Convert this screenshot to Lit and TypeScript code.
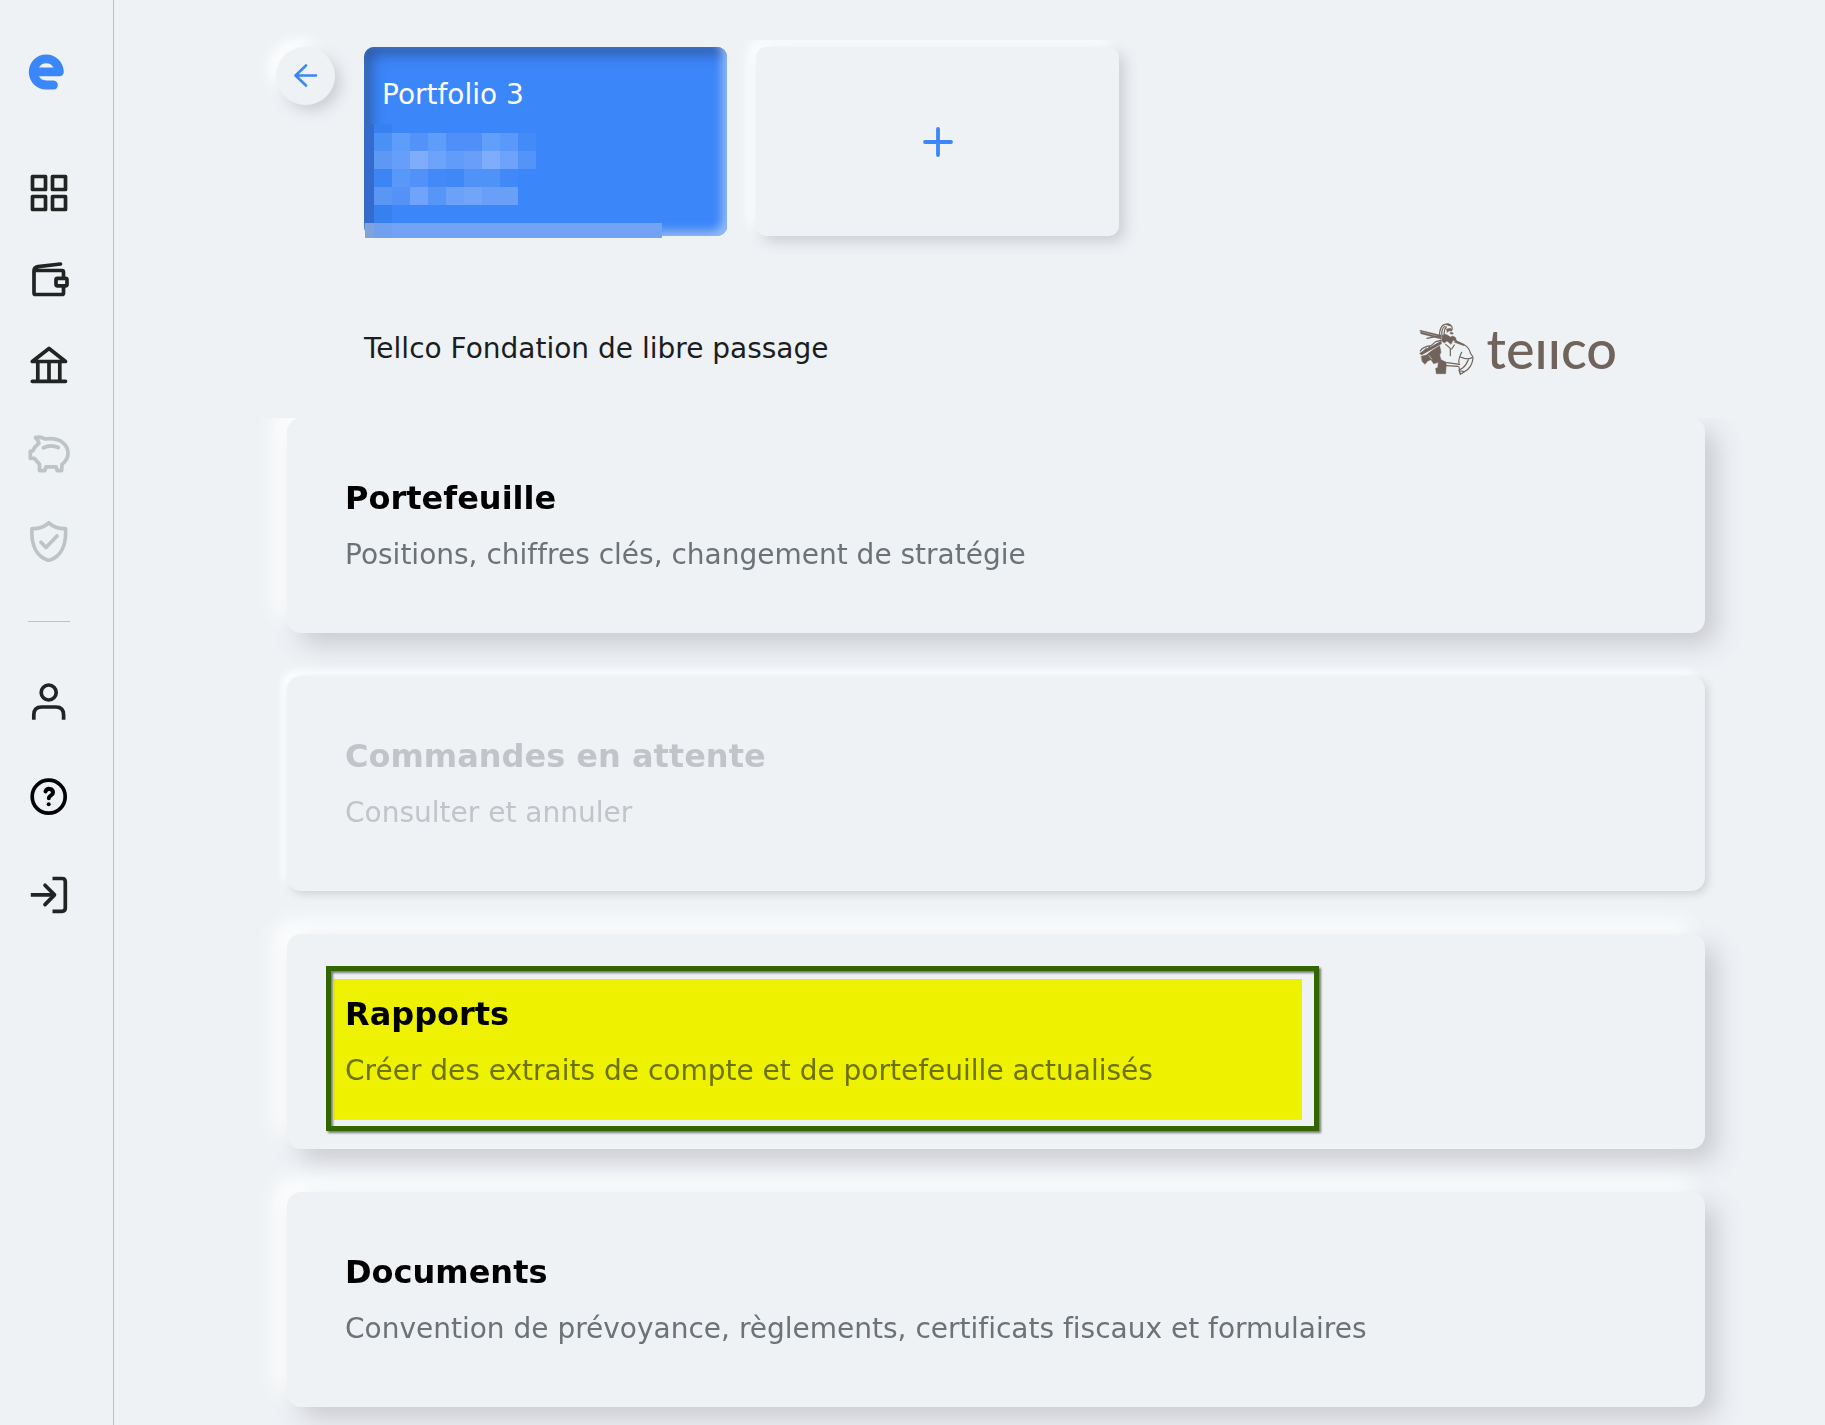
import { LitElement, html, svg, css, nothing } from "lit";
import type { SVGTemplateResult } from "lit";
import { customElement, property } from "lit/decorators.js";

interface NavItem {
  label: string;
  icon: SVGTemplateResult;
  tone?: "muted" | "strong";
}

interface Entry {
  title: string;
  text: string;
  disabled?: boolean;
  highlighted?: boolean;
}

const PRIMARY_NAV: NavItem[] = [
  {
    label: "Aperçu",
    icon: svg`<rect x="4.5" y="4.5" width="13" height="13"/><rect x="24.5" y="4.5" width="13" height="13"/><rect x="4.5" y="24.5" width="13" height="13"/><rect x="24.5" y="24.5" width="13" height="13"/>`,
  },
  {
    label: "Portefeuille",
    icon: svg`<path d="M32.5 5 10 7.6Q6 8.2 6 12V34Q6 35.5 7.5 35.5H34Q35.5 35.5 35.5 34V27M6 11.5H34Q35.5 11.5 35.5 13V19"/><rect x="28" y="19.3" width="11" height="7.5" rx="1.5"/>`,
  },
  {
    label: "Banque",
    icon: svg`<path d="M21 2.5 4.3 15.5H37.5ZM4.3 35.3H37.5M9.8 16V35M21 16V35M31.8 16V35"/>`,
  },
  {
    label: "Épargne",
    tone: "muted",
    icon: svg`<path d="M7.5 4.6Q12.5 3 17 6Q19.5 5.7 22 5.7C33 5.7 40 12 40 20.3Q40 27 34 31.3L33.6 37.6H29.2L28 33.8H18L16.8 37.6H11.5V31.3L6.3 25.3H2.3V18.2L5 17.6Q6.5 13.5 11 10.2Q10 7 7.5 4.6ZM15.3 14.8Q22.7 11 30.3 14.5"/>`,
  },
  {
    label: "Assurance",
    tone: "muted",
    icon: svg`<path d="M20.8 2.8Q27.5 9 37.5 8.7C38.5 25 33 37 20.8 40.5C8.5 37 3 25 4 8.7Q14 9 20.8 2.8ZM13 22.3 18 27.5 29 16"/>`,
  },
];

const SECONDARY_NAV: NavItem[] = [
  {
    label: "Profil",
    icon: svg`<circle cx="20.7" cy="11.5" r="7.5"/><path stroke-linecap="butt" d="M5.8 38.7V34Q5.8 26 13.5 26H28Q35.6 26 35.6 34V38.7"/>`,
  },
  {
    label: "Aide",
    tone: "strong",
    icon: svg`<circle cx="20.7" cy="19.7" r="16.5"/><path stroke-width="4" d="M17.5 14.5C19 10.5 25 11.3 25 15.5C25 18.5 20.8 18.2 20.8 21.3"/><circle cx="20.7" cy="27.2" r="2" fill="currentColor" stroke="none"/>`,
  },
  {
    label: "Déconnexion",
    icon: svg`<path stroke-linecap="butt" d="M24.5 5.5H34Q37.3 5.5 37.3 8.8V35Q37.3 38.3 34 38.3H24.5M2.8 21.9H26"/><path d="M17 12.2 26.5 21.9 17 31.6"/>`,
  },
];

const ENTRIES: Entry[] = [
  { title: "Portefeuille", text: "Positions, chiffres clés, changement de stratégie" },
  { title: "Commandes en attente", text: "Consulter et annuler", disabled: true },
  { title: "Rapports", text: "Créer des extraits de compte et de portefeuille actualisés", highlighted: true },
  { title: "Documents", text: "Convention de prévoyance, règlements, certificats fiscaux et formulaires" },
];

// Blocks that hide the account number and the balance, row by row.
const MASK_CELL = 18;
const MASK_ROWS: string[][] = [
  ["#4a90f5", "#5f9dfb", "#5292f9", "#5f9dfb", "#4e90f8", "#4e90f8", "#629ffb", "#5a99fb", "#438bf8"],
  ["#5c98f4", "#659ff9", "#80adfb", "#6da3fa", "#609cf9", "#699ff9", "#80adfb", "#6da3fa", "#5493f8"],
  ["#3b86f4", "#5997f8", "#5292f8", "#4489f8", "#4088f8", "#4f92f8", "#4f92f8", "#4189f8"],
  ["#5a96f4", "#5492f8", "#70a4fb", "#5796f9", "#6ba1f8", "#70a5f8", "#699ff8", "#6a9ff8"],
];

@customElement("side-nav")
class SideNav extends LitElement {
  static styles = css`
    :host {
      display: block;
      flex: none;
      box-sizing: border-box;
      width: 114px;
      padding: 52px 28px 40px;
      border-right: 1px solid #bcc1c5;
    }
    nav {
      display: flex;
      flex-direction: column;
      gap: 59px;
    }
    svg {
      display: block;
      width: 42px;
      height: 42px;
    }
    .brand {
      display: block;
      margin-bottom: 78px;
      color: #3b86f8;
    }
    .group {
      display: flex;
      flex-direction: column;
      gap: 45px;
      margin: 0;
      padding: 0;
      list-style: none;
    }
    .group.wide {
      gap: 54px;
    }
    .link {
      display: block;
      color: #222424;
    }
    .link.muted {
      color: #bec3c6;
    }
    .link.strong {
      color: #000;
    }
    .rule {
      width: 42px;
      height: 1px;
      margin: 0;
      border: 0;
      background: #bcc1c5;
    }
  `;

  private renderGroup(items: NavItem[], wide: boolean) {
    return html`<ul class="group ${wide ? "wide" : ""}">
      ${items.map(
        (item) => html`<li>
          <a class="link ${item.tone ?? ""}" href="#" aria-label=${item.label}>
            <svg viewBox="0 0 42 42" fill="none" stroke="currentColor" stroke-width="3.7" stroke-linecap="round" stroke-linejoin="round" aria-hidden="true">${item.icon}</svg>
          </a>
        </li>`
      )}
    </ul>`;
  }

  render() {
    return html`
      <a class="brand" href="#" aria-label="Accueil">
        <svg viewBox="0 0 42 42" fill="currentColor" fill-rule="evenodd" aria-hidden="true">
          <path d="M18.2 2.6C8.5 2.6 .8 10.4 .8 20C.8 29.7 8.5 37.6 18.2 37.6H25.5C31.3 37.6 31.3 28.5 25.5 28.5H18.2C14.5 28.5 11.8 26.5 11 24.3H31.5C34.2 24.3 35.8 22.5 35.8 19.8C35.6 10.2 27.8 2.6 18.2 2.6ZM11 15.6C12.5 12.7 15 11.3 18.2 11.3C21.5 11.3 24 12.7 25.4 15.6Z"/>
        </svg>
      </a>
      <nav>
        ${this.renderGroup(PRIMARY_NAV, false)}
        <hr class="rule" />
        ${this.renderGroup(SECONDARY_NAV, true)}
      </nav>
    `;
  }
}

@customElement("portfolio-bar")
class PortfolioBar extends LitElement {
  static styles = css`
    :host {
      display: flex;
      align-items: flex-start;
      gap: 29px;
    }
    button {
      box-sizing: border-box;
      padding: 0;
      border: 0;
      background: #eef2f5;
      font: inherit;
      cursor: pointer;
    }
    .back {
      display: grid;
      place-items: center;
      flex: none;
      width: 59px;
      height: 58px;
      border-radius: 50%;
      color: #3b86f8;
      box-shadow: 6px 6px 14px #cfcfd6, -7px -7px 14px #fff;
    }
    .tiles {
      display: flex;
      flex: 1;
      gap: 29px;
      padding-bottom: 40px;
      clip-path: inset(-7px -40px 0 -20px);
    }
    .tile {
      position: relative;
      flex: 0 1 363px;
      height: 189px;
      border-radius: 10px;
    }
    .current {
      padding: 30px 18px;
      background: #3b86f8;
      box-shadow: inset -5px -5px 10px #98bbf6, inset 7px 7px 14px #2f5ba9;
      color: #fff;
      font-size: 28px;
      line-height: 36px;
      text-align: left;
      display: flex;
      align-items: flex-start;
    }
    .mask {
      position: absolute;
      left: 1px;
      top: 77px;
      width: 297px;
      height: 114px;
    }
    .add {
      display: grid;
      place-items: center;
      color: #3b86f8;
      box-shadow: 6px 6px 14px #cfcfd6, -7px -7px 14px #fff;
    }
  `;

  render() {
    return html`
      <button class="back" aria-label="Retour">
        <svg width="24" height="24" viewBox="0 0 24 24" fill="none" stroke="currentColor" stroke-width="2.6" stroke-linecap="round" stroke-linejoin="round" aria-hidden="true">
          <path d="M22 11.5H2M12 1.5 1.5 11.5 12 21.5"/>
        </svg>
      </button>
      <div class="tiles">
        <button class="tile current">
          <span>Portfolio 3</span>
          <svg class="mask" viewBox="0 0 297 114" shape-rendering="crispEdges" aria-hidden="true">
            <rect width="9" height="99" fill="#346bcc"/>
            <rect x="9" width="18" height="99" fill="#3780f0"/>
            ${MASK_ROWS.map((row, r) =>
              row.map(
                (fill, c) => svg`<rect x=${9 + c * MASK_CELL} y=${9 + r * MASK_CELL} width=${MASK_CELL} height=${MASK_CELL} fill=${fill}/>`
              )
            )}
            <rect y="99" width="297" height="15" fill="#72a3f6"/>
            <rect y="99" width="9" height="15" fill="#80a3dc"/>
            <rect x="9" y="99" width="18" height="15" fill="#71a0ef"/>
          </svg>
        </button>
        <button class="tile add" aria-label="Ajouter un portefeuille">
          <svg width="30" height="30" viewBox="0 0 30 30" fill="none" stroke="currentColor" stroke-width="3.8" stroke-linecap="round" aria-hidden="true">
            <path d="M15 2V28M2 15H28"/>
          </svg>
        </button>
      </div>
    `;
  }
}

@customElement("tellco-logo")
class TellcoLogo extends LitElement {
  static styles = css`
    :host {
      display: flex;
      align-items: center;
      gap: 12px;
      color: #70635b;
    }
    svg {
      display: block;
      width: 56px;
      height: 52px;
    }
    .word {
      font-family: Lato, "Liberation Sans", sans-serif;
      font-size: 54px;
      font-weight: 500;
      line-height: 52px;
    }
  `;

  render() {
    return html`
      <svg viewBox="14 8 168 156" fill="none" stroke="currentColor" stroke-width="3.6" stroke-linejoin="round" stroke-linecap="round" aria-hidden="true">
        <path fill="currentColor" stroke-width="1.5" d="M18 30 80 45V56L20 40Z"/>
        <path stroke="#eef2f5" stroke-width="1" d="M24 35 78 50"/>
        <path d="M38 54 78 46M78 52C72 36 80 14 92 12C104 8 114 14 114 26M84 50C80 36 84 22 92 18M90 46C88 34 90 26 96 20M98 13 110 17"/>
        <path fill="currentColor" stroke-width="1.5" d="M97 26 108 24 114 28 112 32 104 31 99 36ZM109 35 117 38 114 42 108 40ZM84 46 92 42 99 44 108 50 116 47 124 52 126 62 116 60 110 72 98 62 90 68 82 62Z"/>
        <path fill="currentColor" stroke-width="1" d="M124 60 150 72 148 76 120 66ZM17 98 80 62 82 70 22 104Z"/>
        <path d="M18 92C22 84 34 78 50 76L64 64 80 60M24 96 36 84M30 96 46 80M18 100 28 94M40 90 62 76"/>
        <path fill="currentColor" stroke-width="1.5" d="M21 108 36 104 54 90 76 76 80 96 76 104 80 118 96 126 94 160H66L64 144 70 142 72 126 58 130 50 118 40 122 32 132 24 124Z"/>
        <path stroke="#eef2f5" stroke-width="2" d="M44 106 52 116"/>
        <path d="M94 72 108 84V106M98 127 136 132M96 136 132 138M150 74C162 80 166 88 168 98L176 110C168 116 158 116 150 114L138 110M142 96C136 108 132 120 134 128M120 74 112 86"/>
        <path d="M176 114C174 130 164 148 148 156L138 162 134 150 146 142C154 136 158 128 162 118M134 140 138 162M140 152 150 154"/>
      </svg>
      <span class="word" role="img" aria-label="tellco">teııco</span>
    `;
  }
}

@customElement("entry-card")
class EntryCard extends LitElement {
  static styles = css`
    :host {
      display: block;
    }
    .card {
      position: relative;
      box-sizing: border-box;
      display: flex;
      flex-direction: column;
      gap: 19px;
      padding: 60px 58px;
      border-radius: 14px;
      background: #eef2f5;
      box-shadow: 12px 12px 26px #cbcbd2, -12px -12px 22px #fff;
      color: #000;
      text-decoration: none;
    }
    .card.disabled {
      box-shadow: 3px 3px 8px #d0d2d6, -5px -5px 8px #fff;
      color: #c1c4c8;
    }
    .title {
      margin: 0;
      font-size: 32px;
      font-weight: 700;
      line-height: 40px;
    }
    .text {
      margin: 0;
      color: #6d7277;
      font-size: 28px;
      line-height: 36px;
    }
    .disabled .text {
      color: inherit;
    }
    .marker {
      position: absolute;
      inset: 45px 403px 29px 47px;
      background: #ff0;
      mix-blend-mode: multiply;
    }
    .frame {
      position: absolute;
      inset: 32px 386px 18px 39px;
      border: 5px solid #360;
      filter: drop-shadow(2px 2px 1px rgba(0, 0, 0, 0.5));
    }
  `;

  @property({ attribute: false }) entry!: Entry;

  render() {
    const { title, text, disabled, highlighted } = this.entry;
    const content = html`
      <h2 class="title">${title}</h2>
      <p class="text">${text}</p>
      ${highlighted ? html`<span class="frame"></span><span class="marker"></span>` : nothing}
    `;
    return disabled
      ? html`<a class="card disabled" aria-disabled="true">${content}</a>`
      : html`<a class="card" href="#">${content}</a>`;
  }
}

@customElement("app-root")
class AppRoot extends LitElement {
  static styles = css`
    :host {
      display: flex;
      min-height: 100vh;
      background: #eef2f5;
      color: #1b1d1e;
      font-family: "DejaVu Sans", Verdana, sans-serif;
      font-variant-ligatures: none;
    }
    main {
      flex: 1;
      min-width: 0;
      box-sizing: border-box;
      padding: 47px 120px 18px 162px;
    }
    .provider {
      display: flex;
      align-items: center;
      justify-content: space-between;
      gap: 24px;
      margin: 47px 88px 43px;
    }
    .name {
      margin: 0;
      font-size: 28px;
      font-weight: 400;
      line-height: 36px;
    }
    .entries {
      display: flex;
      flex-direction: column;
      gap: 43px;
      margin-left: 11px;
      clip-path: inset(0 -60px -60px -60px);
    }
  `;

  render() {
    return html`
      <side-nav></side-nav>
      <main>
        <portfolio-bar></portfolio-bar>
        <header class="provider">
          <h1 class="name">Tellco Fondation de libre passage</h1>
          <tellco-logo></tellco-logo>
        </header>
        <section class="entries">
          ${ENTRIES.map((entry) => html`<entry-card .entry=${entry}></entry-card>`)}
        </section>
      </main>
    `;
  }
}
